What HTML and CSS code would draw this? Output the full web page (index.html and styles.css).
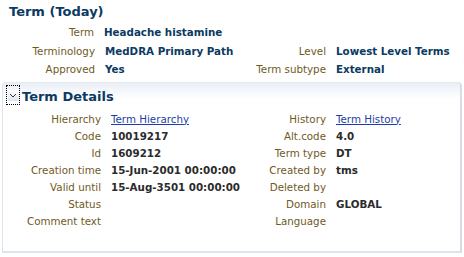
FILE: index.html
```html
<!DOCTYPE html>
<html>
<head>
<meta charset="utf-8">
<link rel="stylesheet" href="styles.css">
</head>
<body>
<div class="page">
  <div class="hdr">Term (Today)</div>
  <div class="top">
    <div class="row term-row">
      <span class="lbl">Term</span><span class="val navy">Headache histamine</span>
    </div>
    <div class="grid2">
      <div class="pair"><span class="lbl">Terminology</span><span class="val navy">MedDRA Primary Path</span></div>
      <div class="pair right"><span class="lbl">Level</span><span class="val navy">Lowest Level Terms</span></div>
      <div class="pair"><span class="lbl">Approved</span><span class="val navy">Yes</span></div>
      <div class="pair right"><span class="lbl">Term subtype</span><span class="val navy">External</span></div>
    </div>
  </div>
  <div class="panel">
    <div class="phdr">
      <span class="toggle"><span class="tbtn"><svg width="10" height="10" viewBox="0 0 10 10"><path d="M2 4 L5 7 L8 4" fill="none" stroke="#333" stroke-width="1"/></svg></span></span>
      <span class="ptitle">Term Details</span>
    </div>
    <div class="dgrid">
      <div class="pair"><span class="lbl">Hierarchy</span><span class="val"><a class="lnk">Term Hierarchy</a></span></div>
      <div class="pair right"><span class="lbl">History</span><span class="val"><a class="lnk">Term History</a></span></div>
      <div class="pair"><span class="lbl">Code</span><span class="val dark">10019217</span></div>
      <div class="pair right"><span class="lbl">Alt.code</span><span class="val dark">4.0</span></div>
      <div class="pair"><span class="lbl">Id</span><span class="val dark">1609212</span></div>
      <div class="pair right"><span class="lbl">Term type</span><span class="val dark">DT</span></div>
      <div class="pair"><span class="lbl">Creation time</span><span class="val dark">15-Jun-2001 00:00:00</span></div>
      <div class="pair right"><span class="lbl">Created by</span><span class="val dark">tms</span></div>
      <div class="pair"><span class="lbl">Valid until</span><span class="val dark">15-Aug-3501 00:00:00</span></div>
      <div class="pair right"><span class="lbl">Deleted by</span><span class="val dark"></span></div>
      <div class="pair"><span class="lbl">Status</span><span class="val dark"></span></div>
      <div class="pair right"><span class="lbl">Domain</span><span class="val dark">GLOBAL</span></div>
      <div class="pair"><span class="lbl">Comment text</span><span class="val dark"></span></div>
      <div class="pair right"><span class="lbl">Language</span><span class="val dark"></span></div>
    </div>
  </div>
</div>
</body>
</html>
```
FILE: styles.css
```css
html, body { margin: 0; padding: 0; background: #fff; }
body { font-family: "DejaVu Sans", Verdana, sans-serif; font-size: 10.3px; width: 464px; height: 257px; overflow: hidden; }
.page { padding: 0; }
.hdr { font-weight: bold; font-size: 13px; color: #0b3a62; padding: 4px 0 0 9px; height: 18px; line-height: 16px; }
.row, .pair { display: flex; align-items: center; height: 18px; }
.term-row { height: 20px; }
.lbl { color: #6f5a1e; text-align: right; flex: none; }
.val { font-weight: bold; white-space: nowrap; }
.navy { color: #0b3a62; }
.dark { color: #2b2b2b; }
.term-row .lbl { width: 94px; }
.term-row .val { margin-left: 10px; }
.grid2 { display: grid; grid-template-columns: 232px 232px; }
.grid2 .pair .lbl { width: 95px; }
.grid2 .pair .val { margin-left: 10px; }
.grid2 .pair.right .lbl { width: 94px; }
.panel { margin: 4px 2px 0 2px; height: 171px; box-sizing: border-box; border: 1px solid #dfe3ea; border-top: 1px solid #e4e8ef; border-bottom: 2px solid #dde4ec; border-right: 2px solid #d8dde4; border-radius: 4px 4px 0 0; background: linear-gradient(#eaeff7 0, #ffffff 16px); }
.phdr { display: flex; align-items: center; height: 24px; padding-left: 3px; }
.toggle { width: 14px; height: 20px; border: 1px dotted #000; box-sizing: border-box; display: flex; align-items: center; justify-content: center; }
.tbtn { width: 11px; height: 11px; display: flex; align-items: center; justify-content: center; background: linear-gradient(#ffffff, #dfe6ef); }
.ptitle { font-weight: bold; font-size: 13px; color: #0b3a62; margin-left: 2px; padding-top: 2px; }
.dgrid { display: grid; grid-template-columns: 230px 230px; margin-top: 3px; }
.dgrid .pair { height: 17px; }
.dgrid .pair .lbl { width: 98px; }
.dgrid .pair .val { margin-left: 10px; }
.dgrid .pair.right .lbl { width: 93px; }
.lnk { color: #1d3ea8; text-decoration: underline; font-weight: normal; }
```
